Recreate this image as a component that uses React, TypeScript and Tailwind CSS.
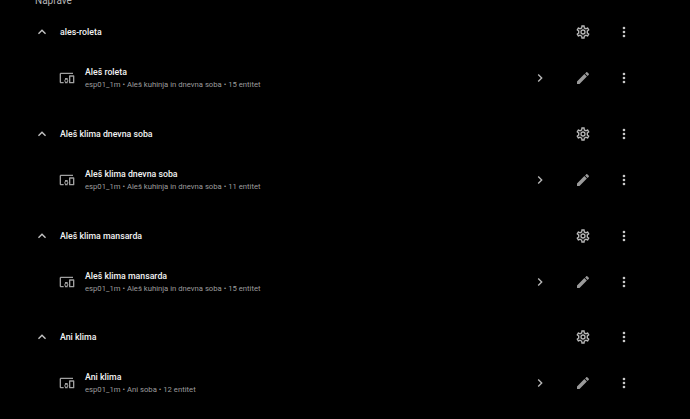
const mdi = {
  up: "M7.41,15.41L12,10.83L16.59,15.41L18,14L12,8L6,14L7.41,15.41Z",
  right: "M8.59,16.58L13.17,12L8.59,7.41L10,6L16,12L10,18L8.59,16.58Z",
  dots: "M12,16A2,2 0 0,1 14,18A2,2 0 0,1 12,20A2,2 0 0,1 10,18A2,2 0 0,1 12,16M12,10A2,2 0 0,1 14,12A2,2 0 0,1 12,14A2,2 0 0,1 10,12A2,2 0 0,1 12,10M12,4A2,2 0 0,1 14,6A2,2 0 0,1 12,8A2,2 0 0,1 10,6A2,2 0 0,1 12,4Z",
  pencil: "M20.71,7.04C21.1,6.65 21.1,6 20.71,5.63L18.37,3.29C18,2.9 17.35,2.9 16.96,3.29L15.12,5.12L18.87,8.87M3,17.25V21H6.75L17.81,9.93L14.06,6.18L3,17.25Z",
  devices: "M3 6H21V4H3C1.9 4 1 4.9 1 6V18C1 19.1 1.9 20 3 20H7V18H3V6M13 12H9V13.78C8.39 14.33 8 15.11 8 16C8 16.89 8.39 17.67 9 18.22V20H13V18.22C13.61 17.67 14 16.88 14 16S13.61 14.33 13 13.78V12M11 17.5C10.17 17.5 9.5 16.83 9.5 16S10.17 14.5 11 14.5 12.5 15.17 12.5 16 11.83 17.5 11 17.5M22 8H16C15.5 8 15 8.5 15 9V19C15 19.5 15.5 20 16 20H22C22.5 20 23 19.5 23 19V9C23 8.5 22.5 8 22 8M21 18H17V10H21V18Z",
  cog: "M12,8A4,4 0 0,1 16,12A4,4 0 0,1 12,16A4,4 0 0,1 8,12A4,4 0 0,1 12,8M12,10A2,2 0 0,0 10,12A2,2 0 0,0 12,14A2,2 0 0,0 14,12A2,2 0 0,0 12,10M10,22C9.75,22 9.54,21.82 9.5,21.58L9.13,18.93C8.5,18.68 7.96,18.34 7.44,17.94L4.95,18.95C4.73,19.03 4.46,18.95 4.34,18.73L2.34,15.27C2.21,15.05 2.27,14.78 2.46,14.63L4.57,12.97L4.5,12L4.57,11L2.46,9.37C2.27,9.22 2.21,8.95 2.34,8.73L4.34,5.27C4.46,5.05 4.73,4.96 4.95,5.05L7.44,6.05C7.96,5.66 8.5,5.32 9.13,5.07L9.5,2.42C9.54,2.18 9.75,2 10,2H14C14.25,2 14.46,2.18 14.5,2.42L14.87,5.07C15.5,5.32 16.04,5.66 16.56,6.05L19.05,5.05C19.27,4.96 19.54,5.05 19.66,5.27L21.66,8.73C21.79,8.95 21.73,9.22 21.54,9.37L19.43,11L19.5,12L19.43,13L21.54,14.63C21.73,14.78 21.79,15.05 21.66,15.27L19.66,18.73C19.54,18.95 19.27,19.04 19.05,18.95L16.56,17.95C16.04,18.34 15.5,18.68 14.87,18.93L14.5,21.58C14.46,21.82 14.25,22 14,22H10M11.25,4L10.88,6.61C9.68,6.86 8.62,7.5 7.85,8.39L5.44,7.35L4.69,8.65L6.8,10.2C6.4,11.37 6.4,12.64 6.8,13.8L4.68,15.36L5.43,16.66L7.86,15.62C8.63,16.5 9.68,17.14 10.87,17.38L11.24,20H12.76L13.13,17.39C14.32,17.14 15.37,16.5 16.14,15.62L18.57,16.66L19.32,15.36L17.2,13.81C17.6,12.64 17.6,11.37 17.2,10.2L19.31,8.65L18.56,7.35L16.15,8.39C15.38,7.5 14.32,6.86 13.12,6.62L12.75,4H11.25Z",
};

function Icon({ d, className }: { d: string; className?: string }) {
  return (
    <svg viewBox="0 0 24 24" fill="currentColor" className={"w-4 h-4 shrink-0 " + (className ?? "")}>
      <path d={d} />
    </svg>
  );
}

const groups = [
  { group: "ales-roleta", name: "Aleš roleta", area: "Aleš kuhinja in dnevna soba", count: 15 },
  { group: "Aleš klima dnevna soba", name: "Aleš klima dnevna soba", area: "Aleš kuhinja in dnevna soba", count: 11 },
  { group: "Aleš klima mansarda", name: "Aleš klima mansarda", area: "Aleš kuhinja in dnevna soba", count: 15 },
  { group: "Ani klima", name: "Ani klima", area: "Ani soba", count: 12 },
];

export default function App() {
  return (
    <div className="h-[419px] overflow-hidden bg-black font-['Roboto',sans-serif] text-[#e1e1e1]">
      <div className="h-[9px] pl-[35px] text-[10px] leading-[10px] -translate-y-[4px] text-[#b4b4b4]">Naprave</div>
      {groups.map((g) => (
        <section key={g.group} className="h-[101.75px]">
          <div className="flex h-[46px] items-center pl-[34px] pr-[58px]">
            <Icon d={mdi.up} className="text-[#c4c4c4]" />
            <span className="ml-[10px] flex-1 pt-px text-[8.75px] font-medium leading-[13px] text-[#f4f4f4]">{g.group}</span>
            <Icon d={mdi.cog} className="text-[#b8b8b8]" />
            <Icon d={mdi.dots} className="ml-[25px] text-[#c8c8c8]" />
          </div>
          <div className="flex h-[46px] items-center pl-[59px] pr-[58px]">
            <Icon d={mdi.devices} className="text-[#a0a0a0]" />
            <div className="ml-[10px] flex-1">
              <p className="text-[8.75px] font-medium leading-[13px] text-[#f4f4f4]">{g.name}</p>
              <p className="text-[7.7px] leading-[11px] text-[#9c9c9c]">
                esp01_1m • {g.area} • {g.count} entitet
              </p>
            </div>
            <Icon d={mdi.right} className="text-[#b8b8b8]" />
            <Icon d={mdi.pencil} className="ml-[27px] text-[#9a9a9a]" />
            <Icon d={mdi.dots} className="ml-[25px] text-[#c8c8c8]" />
          </div>
        </section>
      ))}
    </div>
  );
}
